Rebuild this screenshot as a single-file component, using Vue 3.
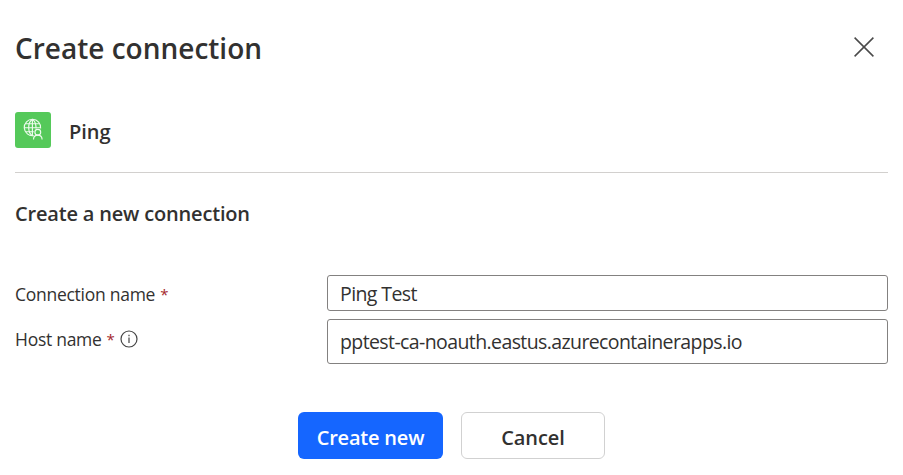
<script setup>
import { ref } from 'vue'

const connectionName = ref('Ping Test')
const hostName = ref('pptest-ca-noauth.eastus.azurecontainerapps.io')
</script>

<template>
  <main class="panel">
    <header class="header">
      <h1 class="title">Create connection</h1>
      <button class="close" type="button" aria-label="Close">
        <svg width="20" height="20" viewBox="0 0 20 20" fill="none" stroke="#4a4a4a" stroke-width="1.5">
          <path d="M.6.6 19.4 19.4M19.4.6.6 19.4" />
        </svg>
      </button>
    </header>

    <section class="connector">
      <div class="logo">
        <svg width="36" height="36" viewBox="0 0 36 36" fill="none" stroke="#effbef" stroke-width="1.15">
          <path d="M18.7 23.6A8.2 8.2 0 1 1 25.6 16.4" />
          <path d="M17.4 23.8C14.9 22.4 13.7 19.4 13.7 15.6S14.9 8.7 17.4 7.4C19.9 8.7 21.1 12 21.1 16.4" />
          <path d="M17.4 7.4V23.8M10.3 11.7H24.5M9.2 15.7H25.6M10.3 19.7H18.8" />
          <circle cx="22.8" cy="20.2" r="2.9" />
          <path d="M18.5 27.4C18.6 24.7 20.2 23.1 22.8 23.1S27 24.7 27.1 27.4" />
        </svg>
      </div>
      <h2 class="connector-name">Ping</h2>
    </section>

    <h3 class="subtitle">Create a new connection</h3>

    <form class="form" @submit.prevent>
      <div class="row">
        <label class="label" for="connection-name">Connection name<span class="star">*</span></label>
        <input id="connection-name" v-model="connectionName" class="field short" />
      </div>
      <div class="row">
        <label class="label host-label" for="host-name">
          Host name<span class="star">*</span>
          <svg class="info" width="18" height="18" viewBox="0 0 18 18" fill="none" stroke="#444" stroke-width="1.2">
            <circle cx="9" cy="9" r="8" />
            <path d="M9 7.6V13M9 4.8V6.2" />
          </svg>
        </label>
        <input id="host-name" v-model="hostName" class="field tall" />
      </div>
      <div class="actions">
        <button class="button primary" type="button">Create new</button>
        <button class="button secondary" type="button">Cancel</button>
      </div>
    </form>
  </main>
</template>

<style>
body {
  margin: 0;
  background: #fff;
}
</style>

<style scoped>
.panel {
  box-sizing: border-box;
  width: 903px;
  height: 475px;
  padding: 28px 15px 0;
  overflow: hidden;
  color: #323130;
  font-family: "Open Sans", "Noto Sans", sans-serif;
}
h1, h2, h3 {
  margin: 0;
  font-weight: 600;
  white-space: nowrap;
}
.header {
  display: flex;
  justify-content: space-between;
  height: 40px;
}
.title {
  font-size: 28px;
  line-height: 41px;
}
.close {
  display: flex;
  align-items: center;
  justify-content: center;
  width: 48px;
  height: 38px;
  padding: 0;
  border: 0;
  background: none;
}
.connector {
  display: flex;
  align-items: center;
  gap: 18px;
  height: 60px;
  padding-top: 32px;
  padding-bottom: 12px;
  border-bottom: 1px solid #d2d0ce;
}
.logo {
  width: 36px;
  height: 36px;
  border-radius: 3px;
  background: #55c95a;
}
.logo svg {
  display: block;
}
.connector-name {
  padding-top: 3px;
  font-size: 20px;
  line-height: 30px;
}
.subtitle {
  margin-top: 25px;
  font-size: 20px;
  line-height: 32px;
  letter-spacing: -0.18px;
}
.form {
  margin-top: 45px;
}
.row {
  display: flex;
  margin-bottom: 8px;
}
.label {
  box-sizing: border-box;
  display: flex;
  width: 312px;
  height: 38px;
  margin-bottom: -2px;
  align-items: center;
  font-size: 17.5px;
  letter-spacing: -0.27px;
  white-space: nowrap;
}
.host-label {
  height: 40px;
}
.star {
  margin-left: 5px;
  color: #a4262c;
  font-size: 15px;
}
.info {
  margin-left: 5px;
}
.field {
  box-sizing: border-box;
  width: 561px;
  padding: 1px 12px 0;
  border: 1px solid #838180;
  border-radius: 3px;
  background: #fff;
  color: #323130;
  font-family: inherit;
  font-size: 19.5px;
  letter-spacing: -0.6px;
  outline: 0;
}
.short {
  height: 36px;
}
.tall {
  height: 45px;
  padding-top: 0;
}
.actions {
  display: flex;
  gap: 18px;
  margin-top: 48px;
  padding-left: 283px;
}
.button {
  box-sizing: border-box;
  height: 47px;
  padding: 3px 0 0;
  border: 0;
  border-radius: 6px;
  font-family: inherit;
  font-size: 20px;
  font-weight: 600;
  letter-spacing: -0.2px;
  white-space: nowrap;
}
.primary {
  width: 145px;
  background: #1566ff;
  color: #fff;
}
.secondary {
  width: 144px;
  border: 1px solid #d1d1d1;
  background: #fff;
  color: #323130;
  letter-spacing: -0.1px;
}
</style>
